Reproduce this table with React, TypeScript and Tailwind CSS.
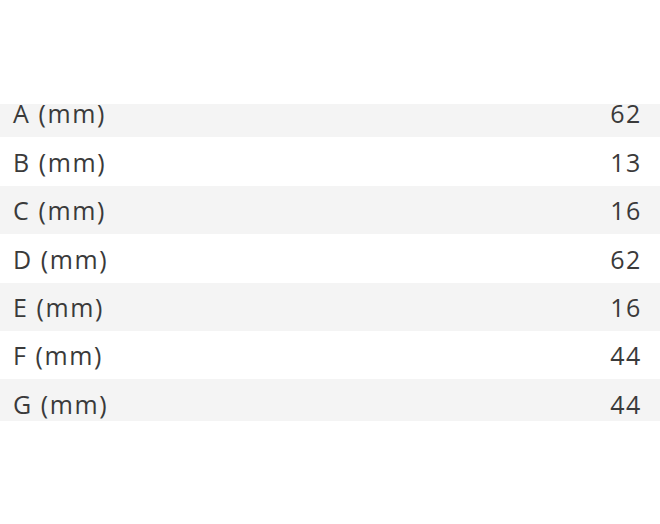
const rows = [
  { label: 'A (mm)', value: '62' },
  { label: 'B (mm)', value: '13' },
  { label: 'C (mm)', value: '16' },
  { label: 'D (mm)', value: '62' },
  { label: 'E (mm)', value: '16' },
  { label: 'F (mm)', value: '44' },
  { label: 'G (mm)', value: '44' },
];

export default function App() {
  return (
    <div className="h-[524px] w-[660px] bg-white pt-[104px] font-['Open_Sans',sans-serif] text-[#3a3a3a]">
      <div className="h-[317px] overflow-hidden">
        <div className="-mt-[15px]">
          {rows.map((row, i) => (
            <div
              key={row.label}
              className={`flex h-[48.4px] items-center justify-between pl-[13px] pr-[18px] pt-[2px] text-[25px] tracking-[1.6px] ${
                i % 2 === 0 ? 'bg-[#f4f4f4]' : 'bg-white'
              }`}
            >
              <span>{row.label}</span>
              <span>{row.value}</span>
            </div>
          ))}
        </div>
      </div>
    </div>
  );
}
